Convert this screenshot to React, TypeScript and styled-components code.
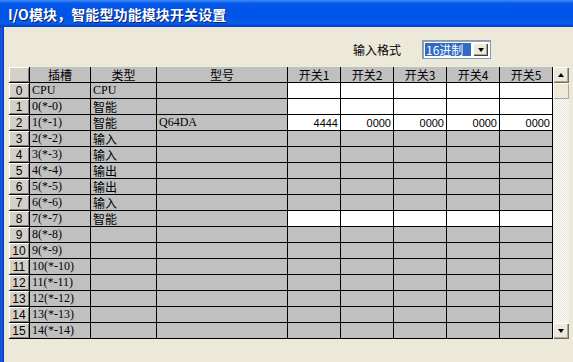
import React from 'react';
import styled, { createGlobalStyle } from 'styled-components';

const GlobalStyle = createGlobalStyle`
  html, body {
    margin: 0;
    padding: 0;
    background: #ece9d8;
    overflow: hidden;
  }
`;

const Window = styled.div`
  width: 573px;
  height: 362px;
  display: flex;
  flex-direction: column;
  background: #ece9d8;
  font-family: 'Noto Sans CJK SC', sans-serif;
`;

const TitleBar = styled.div`
  height: 27px;
  flex: none;
  display: flex;
  align-items: center;
  padding-left: 8px;
  background: linear-gradient(
    #3b8ffb 0,
    #0a5ae8 3px,
    #0055ea 8px,
    #0054e6 18px,
    #0a5ee8 23px,
    #003ccc 27px
  );
`;

const TitleText = styled.span`
  color: #fff;
  font-size: 14px;
  font-weight: 700;
  letter-spacing: 0.1px;
  text-shadow: 1px 1px 0 #0a1e6a;
`;

const Body = styled.div`
  flex: 1;
  display: flex;
`;

const Frame = styled.div`
  width: 4px;
  flex: none;
  background: linear-gradient(90deg, #0841c8 0, #1d63e8 1px, #1658e0 2px, #0a3dbd 3px);
`;

const Content = styled.div`
  flex: 1;
  display: flex;
  flex-direction: column;
  padding-left: 5px;
`;

const Toolbar = styled.div`
  height: 40px;
  display: flex;
  align-items: center;
  justify-content: flex-end;
  gap: 21px;
  padding-right: 82px;
  padding-top: 5px;
  box-sizing: border-box;
`;

const Label = styled.span`
  font-size: 12px;
  color: #000;
`;

const Select = styled.div`
  width: 69px;
  height: 19px;
  box-sizing: border-box;
  display: flex;
  align-items: center;
  padding: 2px;
  gap: 2px;
  background: #fff;
  border: 1px solid #7f9db9;
  box-shadow: inset 1px 1px 0 #a0a0a0;
`;

const SelectValue = styled.span`
  flex: 1;
  height: 13px;
  line-height: 13px;
  background: #316ac5;
  color: #fff;
  font-size: 12px;
  padding-left: 1px;
`;

const DropButton = styled.span`
  width: 15px;
  height: 13px;
  box-sizing: border-box;
  display: flex;
  align-items: center;
  justify-content: center;
  background: #ece9d8;
  box-shadow: inset 1px 1px 0 #fff, inset -1px -1px 0 #404040, inset -2px -2px 0 #aca899;
`;

const Arrow = styled.span<{ $up?: boolean }>`
  width: 0;
  height: 0;
  border-left: 3.5px solid transparent;
  border-right: 3.5px solid transparent;
  ${(p) => (p.$up ? 'border-bottom: 4px solid #000;' : 'border-top: 4px solid #000;')}
`;

const GridArea = styled.div`
  display: flex;
  align-items: flex-start;
`;

const Grid = styled.div`
  display: grid;
  grid-template-columns: 20px 60px 65px 130px repeat(5, 52px);
  grid-auto-rows: 15px;
  gap: 1px;
  padding: 0 1px 1px 0;
  background: #000;
  font-size: 12px;
`;

const Cell = styled.div<{ $white?: boolean; $num?: boolean; $latin?: boolean }>`
  background: ${(p) => (p.$white ? '#fff' : '#c0c0c0')};
  color: #000;
  display: flex;
  align-items: center;
  justify-content: ${(p) => (p.$num ? 'flex-end' : 'flex-start')};
  padding: ${(p) => (p.$num ? '0 2px 0 0' : '0 0 0 2px')};
  white-space: nowrap;
  overflow: hidden;
  font-family: ${(p) =>
    p.$num
      ? "'Liberation Sans', sans-serif"
      : p.$latin
      ? "'Liberation Serif', 'Noto Sans CJK SC', serif"
      : "'Noto Sans CJK SC', sans-serif"};
  font-size: ${(p) => (p.$num ? '11px' : '12px')};
`;

const HeadCell = styled.div`
  background: #c0c0c0;
  display: flex;
  align-items: center;
  justify-content: center;
  font-size: 12px;
  color: #000;
  white-space: nowrap;
`;

const RowHead = styled.div`
  background: #d4d0c8;
  box-shadow: inset 1px 1px 0 #fff, inset -1px -1px 0 #808080;
  display: flex;
  align-items: center;
  justify-content: center;
  font-family: 'Liberation Sans', sans-serif;
  font-size: 12px;
  color: #000;
`;

const Scrollbar = styled.div`
  width: 16px;
  height: 272px;
  display: flex;
  flex-direction: column;
  background-color: #f4f3ee;
  background-image: repeating-conic-gradient(#fff 0 25%, #e6e3d6 0 50%);
  background-size: 2px 2px;
`;

const ScrollButton = styled.div`
  height: 16px;
  flex: none;
  display: flex;
  align-items: center;
  justify-content: center;
  background: #ece9d8;
  box-shadow: inset 1px 1px 0 #fff, inset -1px -1px 0 #716f64, inset -2px -2px 0 #aca899;
`;

const Thumb = styled.div`
  height: 16px;
  flex: none;
  background: #ece9d8;
  box-shadow: inset 1px 1px 0 #fff, inset -1px -1px 0 #aca899;
`;

const Track = styled.div`
  flex: 1;
`;

type Row = { slot: string; type: string; model?: string; white?: boolean; values?: string[] };

const rows: Row[] = [
  { slot: 'CPU', type: 'CPU', white: true },
  { slot: '0(*-0)', type: '智能', white: true },
  { slot: '1(*-1)', type: '智能', model: 'Q64DA', white: true, values: ['4444', '0000', '0000', '0000', '0000'] },
  { slot: '2(*-2)', type: '输入' },
  { slot: '3(*-3)', type: '输入' },
  { slot: '4(*-4)', type: '输出' },
  { slot: '5(*-5)', type: '输出' },
  { slot: '6(*-6)', type: '输入' },
  { slot: '7(*-7)', type: '智能', white: true },
  { slot: '8(*-8)', type: '' },
  { slot: '9(*-9)', type: '' },
  { slot: '10(*-10)', type: '' },
  { slot: '11(*-11)', type: '' },
  { slot: '12(*-12)', type: '' },
  { slot: '13(*-13)', type: '' },
  { slot: '14(*-14)', type: '' },
];

const headers = ['插槽', '类型', '型号', '开关1', '开关2', '开关3', '开关4', '开关5'];

const App: React.FC = () => {
  return (
    <>
      <GlobalStyle />
      <Window>
        <TitleBar>
          <TitleText>I/O模块，智能型功能模块开关设置</TitleText>
        </TitleBar>
        <Body>
          <Frame />
          <Content>
            <Toolbar>
              <Label>输入格式</Label>
              <Select>
                <SelectValue>16进制</SelectValue>
                <DropButton>
                  <Arrow />
                </DropButton>
              </Select>
            </Toolbar>
            <GridArea>
              <Grid>
                <RowHead />
                {headers.map((h) => (
                  <HeadCell key={h}>{h}</HeadCell>
                ))}
                {rows.map((r, i) => (
                  <React.Fragment key={i}>
                    <RowHead>{i}</RowHead>
                    <Cell $latin>{r.slot}</Cell>
                    <Cell $latin={r.type === 'CPU'}>{r.type}</Cell>
                    <Cell $latin>{r.model ?? ''}</Cell>
                    {[0, 1, 2, 3, 4].map((k) => (
                      <Cell key={k} $white={r.white} $num>
                        {r.values ? r.values[k] : ''}
                      </Cell>
                    ))}
                  </React.Fragment>
                ))}
              </Grid>
              <Scrollbar>
                <ScrollButton>
                  <Arrow $up />
                </ScrollButton>
                <Thumb />
                <Track />
                <ScrollButton>
                  <Arrow />
                </ScrollButton>
              </Scrollbar>
            </GridArea>
          </Content>
        </Body>
      </Window>
    </>
  );
};

export default App;
